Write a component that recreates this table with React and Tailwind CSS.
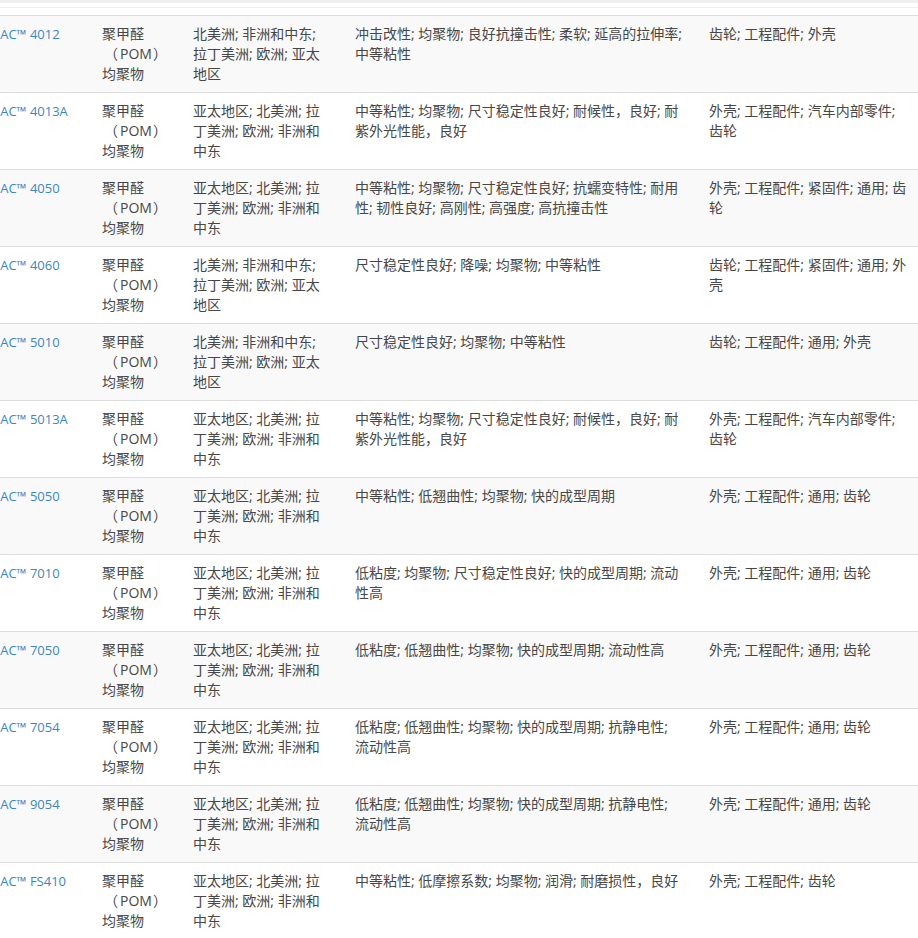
import React from "react";

const APAC = "亚太地区; 北美洲; 拉丁美洲; 欧洲; 非洲和中东";
const NA = "北美洲; 非洲和中东; 拉丁美洲; 欧洲; 亚太地区";

const rows = [
  { name: "TENAC™ 4012", region: NA, feat: "冲击改性; 均聚物; 良好抗撞击性; 柔软; 延高的拉伸率; 中等粘性", use: "齿轮; 工程配件; 外壳" },
  { name: "TENAC™ 4013A", region: APAC, feat: "中等粘性; 均聚物; 尺寸稳定性良好; 耐候性，良好; 耐紫外光性能，良好", use: "外壳; 工程配件; 汽车内部零件; 齿轮" },
  { name: "TENAC™ 4050", region: APAC, feat: "中等粘性; 均聚物; 尺寸稳定性良好; 抗蠕变特性; 耐用性; 韧性良好; 高刚性; 高强度; 高抗撞击性", use: "外壳; 工程配件; 紧固件; 通用; 齿轮" },
  { name: "TENAC™ 4060", region: NA, feat: "尺寸稳定性良好; 降噪; 均聚物; 中等粘性", use: "齿轮; 工程配件; 紧固件; 通用; 外壳" },
  { name: "TENAC™ 5010", region: NA, feat: "尺寸稳定性良好; 均聚物; 中等粘性", use: "齿轮; 工程配件; 通用; 外壳" },
  { name: "TENAC™ 5013A", region: APAC, feat: "中等粘性; 均聚物; 尺寸稳定性良好; 耐候性，良好; 耐紫外光性能，良好", use: "外壳; 工程配件; 汽车内部零件; 齿轮" },
  { name: "TENAC™ 5050", region: APAC, feat: "中等粘性; 低翘曲性; 均聚物; 快的成型周期", use: "外壳; 工程配件; 通用; 齿轮" },
  { name: "TENAC™ 7010", region: APAC, feat: "低粘度; 均聚物; 尺寸稳定性良好; 快的成型周期; 流动性高", use: "外壳; 工程配件; 通用; 齿轮" },
  { name: "TENAC™ 7050", region: APAC, feat: "低粘度; 低翘曲性; 均聚物; 快的成型周期; 流动性高", use: "外壳; 工程配件; 通用; 齿轮" },
  { name: "TENAC™ 7054", region: APAC, feat: "低粘度; 低翘曲性; 均聚物; 快的成型周期; 抗静电性; 流动性高", use: "外壳; 工程配件; 通用; 齿轮" },
  { name: "TENAC™ 9054", region: APAC, feat: "低粘度; 低翘曲性; 均聚物; 快的成型周期; 抗静电性; 流动性高", use: "外壳; 工程配件; 通用; 齿轮" },
  { name: "TENAC™ FS410", region: APAC, feat: "中等粘性; 低摩擦系数; 均聚物; 润滑; 耐磨损性，良好", use: "外壳; 工程配件; 齿轮" },
];

// 聚甲醛（POM）均聚物, set in three lines with full-width brackets
const Polymer = () => (
  <>
    聚甲醛
    <br />
    <span className="whitespace-nowrap">
      <span className="inline-block w-[18px] text-center">（</span>
      POM
      <span className="inline-block w-[16px] text-center">）</span>
    </span>
    <br />
    均聚物
  </>
);

export default function App() {
  return (
    <div
      className="w-[918px] h-[938px] overflow-hidden bg-white text-[14px] leading-[20px] text-[#474747]"
      style={{ fontFamily: '"Open Sans", "Noto Sans CJK SC", sans-serif' }}
    >
      {/* === top edge of the page === */}
      <div className="h-[3px] bg-[#eff0f1]" />
      <div className="h-[4px]" />
      <div className="h-px bg-[#eeeeee]" />
      <div className="h-[7px]" />

      {/* === product rows === */}
      <div className="-ml-[34px] w-[1000px]">
        {rows.map((r, i) => (
          <div
            key={r.name}
            className={`flex border-t border-[#dddddd] py-2 ${i % 2 === 0 ? "bg-[#f9f9f9]" : "bg-white"}`}
          >
            <div className="w-[128px] shrink-0 pl-[10px]">
              <a href="#" className="text-[13px] text-[#3a86c4]">{r.name}</a>
            </div>
            <div className="w-[91px] shrink-0 pl-2 pr-[13px]">
              <Polymer />
            </div>
            <div className="w-[162px] shrink-0 pl-2 pr-[24px]">{r.region}</div>
            <div className="w-[354px] shrink-0 pl-2 pr-4">{r.feat}</div>
            <div className="w-[230px] shrink-0 pl-2 pr-[22px]">{r.use}</div>
          </div>
        ))}
      </div>
    </div>
  );
}
